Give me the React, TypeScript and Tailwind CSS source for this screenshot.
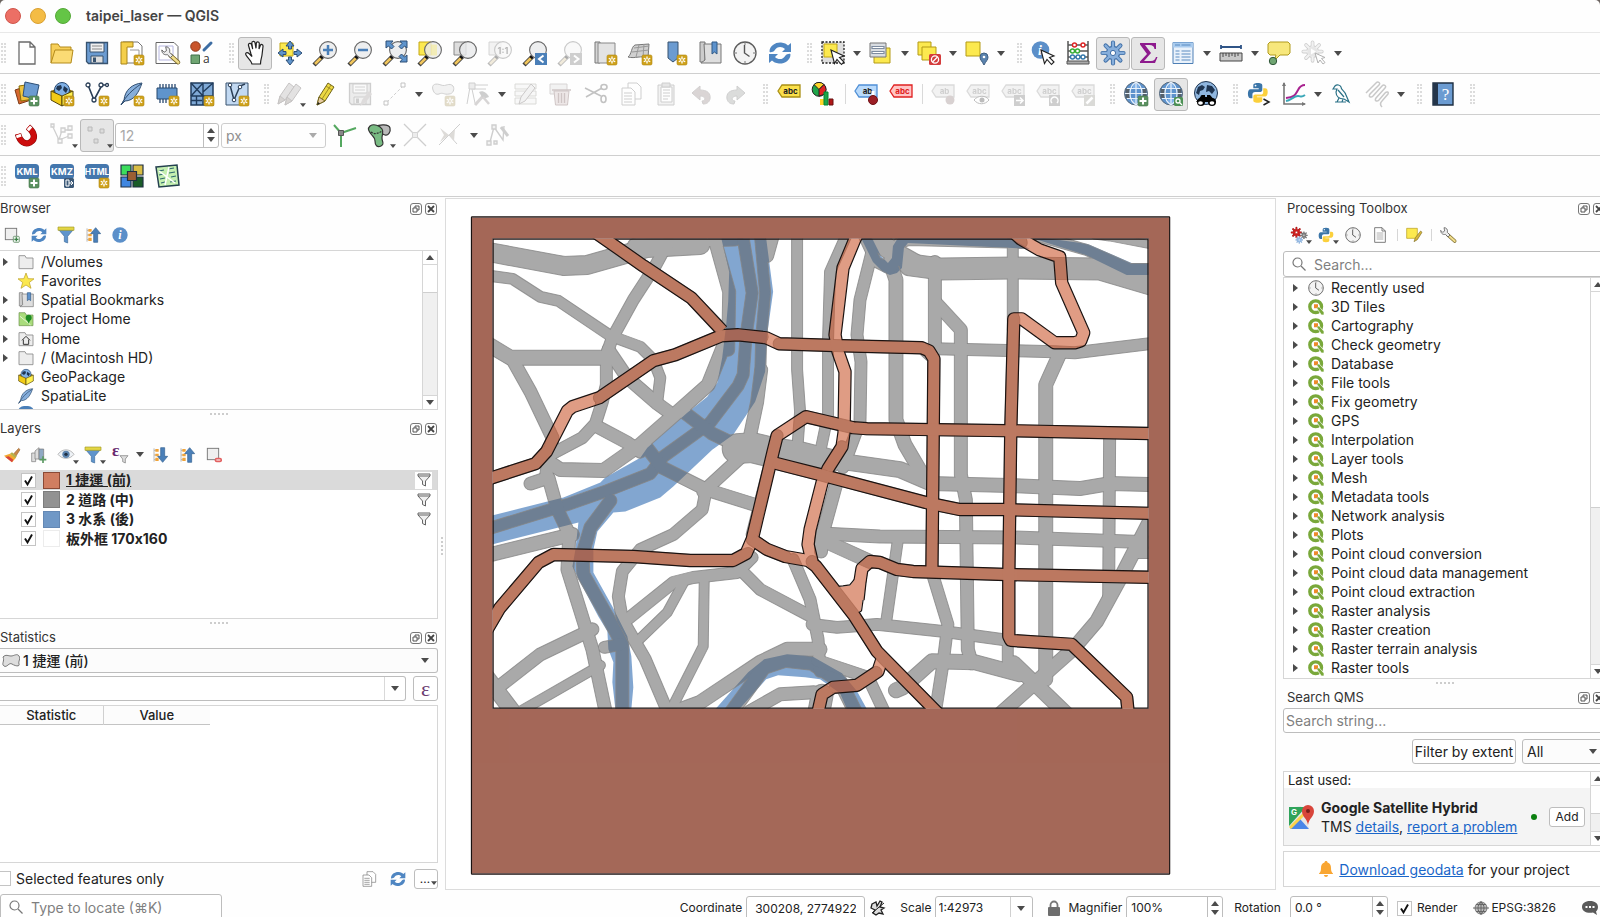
import type { ReactNode } from "react";

/* ---------- shared icon parts (24x24 grid) ---------- */

const star = (
  <g>
    <rect x="14" y="14" width="10" height="10" rx="1.5" fill="#cfa21c" stroke="#b0860f" strokeWidth=".6" />
    <path d="M19 15.5v7M15.8 17.2l6.4 3.6M22.2 17.2l-6.4 3.6" stroke="#fff" strokeWidth="1.3" />
    <circle cx="19" cy="19" r="1" fill="#cfa21c" />
  </g>
);

const plus = (
  <g>
    <rect x="14" y="14" width="10" height="10" rx="1.5" fill="#5b9160" stroke="#44764a" strokeWidth=".6" />
    <path d="M19 15.5v7M15.5 19h7" stroke="#fff" strokeWidth="2" />
  </g>
);

const lens = (
  <g>
    <path d="M9.5 15.5L1 24" stroke="#3d3d3d" strokeWidth="4.4" />
    <path d="M8 17L2 23" stroke="#f0c55c" strokeWidth="2.6" />
    <path d="M7.5 15l2 2" stroke="#111" strokeWidth="3" />
    <circle cx="15" cy="9" r="8.4" fill="#e9eaeb" fillOpacity=".82" stroke="#666" strokeWidth="1.1" />
  </g>
);

const globe = (
  <g>
    <circle cx="12" cy="11.5" r="11.5" fill="#5d92cc" stroke="#5a6a7a" />
    <path d="M1.5 7h4v9h-4zM18.5 7h4v9h-4z" fill="#56616b" />
    <path d="M9 2h6v5H9zM9 16h6v5H9z" fill="#7fb0e6" />
    <path
      d="M3 6.5h18M1 11.5h22M3 16.5h18M12 0v23M12 0c-8 5-8 18 0 23M12 0c8 5 8 18 0 23"
      fill="none"
      stroke="#e8f1fa"
      strokeWidth="1.2"
    />
  </g>
);

const worldPatches = (
  <path d="M4 5l4-2 3 2-2 3-3 1-1 4-3-2zM13 3l5 1 3 4-3 4-3-3-3 1zM7 13l4 1 1 4-3 3-3-4z" fill="#1f3551" />
);

const refresh = (
  <g fill="#4f86c2">
    <path d="M1.5 10.5C1.5 4.5 8 1 13 1.5c3.5.3 5.5 1.5 7 3L23 2v9h-9l3-3c-3-3-8-3-10.5 1.5-1 1.5-5 2.5-5 1z" />
    <path d="M22.5 13.5c0 6-6.5 9.5-11.5 9-3.5-.3-5.5-1.5-7-3L1 22v-9h9l-3 3c3 3 8 3 10.5-1.5 1-1.5 5-2.5 5-1z" />
  </g>
);

const arrowUpDown = (up: boolean) => (
  <g>
    <path d="M3 2v20M3 5h6M3 12h6M3 19h6" stroke="#9a9a9a" fill="none" />
    <path d="M5 3h5v4H5zM5 16h5v5H5zM5 10h5v4H5z" fill="#f0a43a" />
    <path
      d="M13 23V10H8.5L16 1l7.5 9H19v13z"
      fill="#4a7fb8"
      stroke="#305f90"
      transform={up ? undefined : "rotate(180 16 12)"}
    />
  </g>
);

const tag = (fill: string, line: string, text: string, color = "#222") => (
  <g>
    <path d="M1 9l4-6h18v12H5z" fill={fill} stroke={line} strokeWidth="1.3" />
    <text x="13.5" y="12" textAnchor="middle" fontSize="8" fontWeight="700" fontFamily="Inter, sans-serif" fill={color}>
      {text}
    </text>
  </g>
);

const funnel = (
  <g>
    <path d="M1 4h22l-8.5 10v10l-5-2v-8z" fill="#5f94cc" stroke="#3f6c9c" />
    <path d="M0 0h24v5H0z" fill="#e3d644" stroke="#a59b25" />
  </g>
);

const feather = (
  <g>
    <path d="M22 1C12 2 5 8 4 18l-3 5 4-4c9 0 14-9 17-18z" fill="#86aedb" stroke="#2f4d70" />
    <path d="M1 23C6 14 12 8 21 2" fill="none" stroke="#2f4d70" />
  </g>
);

const geoBox = (
  <g>
    <path d="M1 9l11 5 11-5-11-5z" fill="#8a6d06" />
    <circle cx="12" cy="8" r="7.5" fill="#7fb0e6" stroke="#27486f" />
    <path d="M7 4l4-1 1 3-3 3-3-2zM14 4l4 3-2 4-3-3z" fill="#1f3551" />
    <path d="M1 9l11 5v10L1 18z" fill="#f2cb16" stroke="#54450a" />
    <path d="M23 9l-11 5v10l11-6z" fill="#fff04f" stroke="#54450a" />
  </g>
);

const python = (
  <g>
    <path d="M12 1c-4 0-5 1-5 3v3h6v1H4c-2 0-3 2-3 5s1 5 3 5h2v-4c0-2 1-3 3-3h6c1 0 2-1 2-2V4c0-2-1-3-5-3z" fill="#3b75a8" />
    <path d="M12 23c4 0 5-1 5-3v-3h-6v-1h9c2 0 3-2 3-5s-1-4-3-4h-2v4c0 2-1 3-3 3H9c-1 0-2 1-2 2v4c0 2 1 3 5 3z" fill="#fbd03c" />
    <circle cx="9.5" cy="4" r="1" fill="#fff" />
  </g>
);

const clock = (
  <g>
    <circle cx="12" cy="12" r="11" fill="#f3f3f3" stroke="#5c5c5c" strokeWidth="1.3" />
    <path d="M11.5 4v8l5 3.5" fill="none" stroke="#555" strokeWidth="1.4" />
    <path d="M12 2v2M12 20v2M2 12h2M20 12h2" stroke="#777" />
  </g>
);

const wrench = (
  <g>
    <path d="M12 12l10 9" stroke="#7b6a2c" strokeWidth="5.4" strokeLinecap="round" />
    <path d="M12 12l10 9" stroke="#f0dd8c" strokeWidth="3.4" strokeLinecap="round" />
    <path d="M6 1l1 5-3 2-3-3c0 5 4 7 7 6l4 4 3-3-4-4c1-4-1-7-5-7z" fill="#ececec" stroke="#444" />
  </g>
);

const pencil = (
  <g>
    <path d="M4 23l2-8L15 1l6 4-9 14z" fill="#ecd843" stroke="#71651c" />
    <path d="M4 23l2-8 6 4z" fill="#e7cba3" stroke="#71651c" />
    <path d="M4 23l1-3 2 1.5z" fill="#222" />
    <path d="M13 4l6 4M9 17l9-14" fill="none" stroke="#a08f22" />
  </g>
);

const floppy = (a: string, b: string) => (
  <g>
    <path d="M1.5 1.5h21v21h-19l-2-2z" fill={a} stroke={b} strokeWidth="1.3" />
    <path d="M5 2h14v9H5z" fill="#f0f0f0" stroke={b} />
    <path d="M7 5h10M7 8h10" stroke="#888" />
    <path d="M6 15h12v7H6z" fill="#ddd" stroke={b} />
    <path d="M8 16.5h3V21H8z" fill={b} />
  </g>
);

const sheet = <path d="M4 1h11l5 5v17H4zM15 1v5h5" fill="#fff" stroke="#6b6b6b" strokeWidth="1.3" />;

const copy = (
  <g fill="#fff" stroke="#777">
    <path d="M9 1h9l4 4v12H9z" />
    <path d="M3 6h9l4 4v13H3z" />
    <path d="M5 11h8M5 14h8M5 17h8M5 20h8" />
  </g>
);

const cursor = <path d="M10 9l3.5 13.5 2.5-4 4.5 5 2.5-2.5-4.5-4.5 4.5-1.5z" fill="#fff" stroke="#222" strokeWidth="1.1" />;

const gear = (fill: string, line: string) => (
  <g>
    <path
      d="M12 1.5v21M1.5 12h21M4.6 4.6l14.8 14.8M19.4 4.6L4.6 19.4"
      stroke={line}
      strokeWidth="4.2"
      strokeLinecap="round"
    />
    <circle cx="12" cy="12" r="7.2" fill={line} />
    <path d="M12 1.5v21M1.5 12h21M4.6 4.6l14.8 14.8M19.4 4.6L4.6 19.4" stroke={fill} strokeWidth="2.4" strokeLinecap="round" />
    <circle cx="12" cy="12" r="6" fill={fill} />
    <circle cx="12" cy="12" r="2.6" fill="#fff" stroke={line} />
  </g>
);

const bookmarkBook = (
  <g>
    <path d="M2 1h5v20H2z" fill="#ccc" stroke="#777" />
    <path d="M6 3h17v19H3l4-3z" fill="#dedede" stroke="#777" />
    <path d="M14 1h5v12l-2.5-2-2.5 2z" fill="#5d92cc" stroke="#315b87" />
  </g>
);

const folder = (
  <path d="M1.5 2.5h9l2 3.5h10v16h-21z" fill="#ededed" stroke="#8c8c8c" strokeWidth="1.3" />
);

const box = <rect x="2" y="2" width="17" height="17" fill="#efefef" stroke="#777" strokeWidth="1.4" />;

const kmlTag = (text: string) => (
  <g>
    <rect x="0" y="0" width="24" height="15" rx="3.5" fill="#4477ad" />
    <text x="12" y="11" textAnchor="middle" fontSize={text.length > 3 ? 8.5 : 9.5} fontWeight="700" fontFamily="Inter, sans-serif" fill="#fff">
      {text}
    </text>
  </g>
);

const icons: Record<string, ReactNode> = {
  file: sheet,
  open: (
    <g stroke="#b38a1a">
      <path d="M1 22V3h7l2 3h11v5" fill="#f7cf59" />
      <path d="M1 22L5 9h18l-2 13z" fill="#fbdb74" />
    </g>
  ),
  save: floppy("#6b9bd1", "#38536f"),
  layout: (
    <g>
      <path d="M3 1h15l4 4v17H3z" fill="#fff" stroke="#777" />
      <path d="M1 1h12v5H7v17H1z" fill="#f4cf4a" stroke="#a98518" />
      <path d="M10 9h9v8" fill="none" stroke="#999" />
      {star}
    </g>
  ),
  manager: (
    <g>
      <path d="M1 1.5h18l4 4v17H1z" fill="#fff" stroke="#666" />
      <path d="M4 5h14v14H4z" fill="none" stroke="#b6b6e0" />
      <g transform="translate(6 5) scale(.78)">{wrench}</g>
    </g>
  ),
  style: (
    <g>
      <circle cx="5.5" cy="5.5" r="4.8" fill="#c9562c" stroke="#8f3a1a" />
      <path d="M14 9l7-7" stroke="#3d6da3" strokeWidth="3" strokeLinecap="round" />
      <path d="M1 14h8.5v8.5H1z" fill="#6fa572" stroke="#41704a" />
      <text x="13" y="22" fontSize="12" fontFamily="Open Sans, sans-serif" fill="#333">a</text>
    </g>
  ),
  hand: (
    <path
      d="M8 13L5.5 4.5c-.5-2.5 2.5-3 3-.8L9.7 8 8.8 2c0-2 2.7-2.3 3.2-.3l1 5.6.3-5.1c.3-2 3-1.7 3 .3L16 8l1.3-3.5c.8-1.800 3-1 2.700 1L19 14c-.4 3.500-1.500 4.500-1.500 9H9C8 19 4.500 17 3 14c-1-2 1-3.500 3-1.500l3 3z"
      fill="#fff"
      stroke="#222"
      strokeWidth="1.2"
    />
  ),
  pan: (
    <g>
      <path d="M2 2h13v13H2z" fill="#fce94f" stroke="#c4a817" />
      <path
        d="M12 0l4 5h-2.5v3h-3V5H8zM12 24l4-5h-2.5v-3h-3v3H8zM0 12l5-4v2.5h3v3H5V16zM24 12l-5-4v2.5h-3v3h3V16z"
        fill="#5f94cc"
        stroke="#2d4f76"
      />
    </g>
  ),
  zoomIn: <g>{lens}<path d="M15 4v10M10 9h10" stroke="#4a7fb8" strokeWidth="2.5" /></g>,
  zoomOut: <g>{lens}<path d="M10 9h10" stroke="#4a7fb8" strokeWidth="2.5" /></g>,
  zoomFull: (
    <g>
      {lens}
      <path d="M3 0h7L8 2.5l3 3L8.5 8l-3-3L3 7zM24 0h-7l2 2.5-3 3L18.5 8l3-3L24 7zM24 21h-7l2-2.5-3-3 2.5-2.5 3 3L24 14z" fill="#5f94cc" stroke="#2d4f76" />
    </g>
  ),
  zoomSel: <g><path d="M1 1h12v13H1z" fill="#fce94f" stroke="#c4a817" />{lens}<path d="M13 3.5h6v11h-6z" fill="#fce94f" opacity=".35" /></g>,
  zoomLayer: <g><path d="M1 1h12v13H1z" fill="#ddd" stroke="#888" />{lens}</g>,
  zoomNative: (
    <g>
      <path d="M1 1h12v13H1z" fill="#ddd" stroke="#888" />
      {lens}
      <text x="15" y="12.5" textAnchor="middle" fontSize="9" fontWeight="700" fontFamily="Inter, sans-serif" fill="#333">1:1</text>
    </g>
  ),
  zoomLast: <g>{lens}<path d="M12 12h12v12H12z" fill="#4a7fb8" /><path d="M20.5 14.5L16 18l4.5 3.5" stroke="#fff" strokeWidth="2" fill="none" /></g>,
  zoomNext: <g>{lens}<path d="M12 12h12v12H12z" fill="#777" /><path d="M16 14.5l4.5 3.5-4.5 3.5" stroke="#fff" strokeWidth="2" fill="none" /></g>,
  newMap: <g><path d="M2 1h5v21H2z" fill="#d5d5d5" stroke="#777" /><path d="M5 2h17v20H5z" fill="#e3e3e3" stroke="#888" />{star}</g>,
  map3d: <g><path d="M0 16c4-3 3-10 7-12l14-1-1 14c-7-3-13 1-20-1z" fill="#d0d0d0" stroke="#777" /><path d="M4 11l17-2M11 4L8 16M16 3l-1 13M6 7l15-2" stroke="#999" fill="none" />{star}</g>,
  newMark: <g><path d="M5 1h10v16l-5 4-5-4z" fill="#6b9bd1" stroke="#38536f" />{star}</g>,
  marks: bookmarkBook,
  clock,
  refresh,
  select: (
    <g>
      <path d="M1 1h22v21H1z" fill="#dedede" stroke="#222" strokeWidth="1.3" strokeDasharray="2 1.5" />
      <path d="M3 3h13v13H3z" fill="#fce94f" stroke="#c4a817" />
      {cursor}
    </g>
  ),
  selValue: (
    <g>
      <path d="M5 7h16v15H5z" fill="#fce94f" stroke="#b39a17" />
      <path d="M1 2h16v14H1z" fill="#d9dde2" stroke="#777" />
      <path d="M3 5.5h12v2H3zM3 10.5h12v2H3z" fill="#fff" stroke="#7e8ca0" strokeWidth="1.2" />
    </g>
  ),
  deselect: (
    <g>
      <path d="M1 1h13v13H1z" fill="#fce94f" stroke="#b39a17" />
      <path d="M5 6h14v13H5z" fill="#fce94f" stroke="#b39a17" />
      <rect x="12" y="13" width="12" height="11" rx="1.5" fill="#d43c3c" />
      <circle cx="18" cy="18.5" r="3.6" fill="none" stroke="#fff" strokeWidth="1.3" />
      <path d="M15.5 21l5-5" stroke="#fff" strokeWidth="1.3" />
    </g>
  ),
  selLoc: (
    <g>
      <path d="M1 1h14v14H1z" fill="#fce94f" stroke="#b39a17" />
      <path d="M19 24c-2-4-4-5-4-8a4 4 0 018 0c0 3-2 4-4 8z" fill="#5b83ad" stroke="#3f5f82" />
      <circle cx="19" cy="16" r="1.3" fill="#fff" />
    </g>
  ),
  identify: (
    <g>
      <circle cx="9.5" cy="9" r="8.8" fill="#5b8fc9" />
      <text x="9" y="14" textAnchor="middle" fontSize="14" fontStyle="italic" fontWeight="700" fontFamily="Liberation Serif, serif" fill="#fff">i</text>
      {cursor}
    </g>
  ),
  abacus: (
    <g>
      <path d="M2 0v23M22 0v23M2 4h20M2 10h20M2 16h20" stroke="#555" strokeWidth="1.5" />
      <path d="M1 20h22v3H1z" fill="#aaa" stroke="#555" />
      <g fill="#fff" strokeWidth="1.4">
        <g stroke="#d22"><circle cx="8.5" cy="4" r="2" /><circle cx="17" cy="4" r="2" /></g>
        <g stroke="#3a3"><circle cx="6.5" cy="10" r="2" /><circle cx="11.5" cy="10" r="2" /></g>
        <g stroke="#37a"><circle cx="6.5" cy="16" r="2" /><circle cx="12" cy="16" r="2" /><circle cx="17" cy="16" r="2" /></g>
      </g>
    </g>
  ),
  gear: gear("#86aedb", "#3f6ea5"),
  sigma: <path d="M4 2h16v6h-1.5c-.5-3-2-4-5-4H9l6 8-7 8h7c3 0 4-1.5 5-4h1.5L19 22H4v-1.5L11 13 4 3.5z" fill="#8d1a8d" />,
  table: (
    <g>
      <path d="M2 1.5h20v21H2z" fill="#eaf2fb" stroke="#4d7fb5" />
      <path d="M2 1.5h20v5H2z" fill="#a9cbee" />
      <path d="M4.5 10h4M10.5 10h9M4.5 13h4M10.5 13h9M4.5 16h4M10.5 16h9M4.5 19h4M10.5 19h9M4 4h5M10.5 4h9" stroke="#5a8cc2" strokeWidth="1.2" />
    </g>
  ),
  ruler: (
    <g>
      <path d="M2 6h20M2 4v4M22 4v4" stroke="#2f5486" strokeWidth="1.8" />
      <path d="M1 12h22v8H1z" fill="#c9c9c9" stroke="#444" />
      <path d="M4 12v4M7 12v3M10 12v4M13 12v3M16 12v4M19 12v3" stroke="#444" />
    </g>
  ),
  tip: (
    <g>
      <path d="M3 1h18l2 2v9l-2 2h-8l-6 6 2-6H3l-2-2V3z" fill="#f7e77c" stroke="#b09a1d" />
      <circle cx="6" cy="20" r="3.7" fill="#6fa572" stroke="#31573a" />
    </g>
  ),
  action: (
    <g>
      <g transform="scale(.88)">{gear("#ddd", "#777")}</g>
      <circle cx="10.5" cy="10.5" r="5" fill="#bbb" />
      <path d="M9 7.5l5 3-5 3z" fill="#fff" />
      <path d="M13 12l3 10 2-3 3 4 2-1.5-3.500-4 3.500-1z" fill="#fff" stroke="#222" />
    </g>
  ),
  dataSrc: (
    <g>
      <path d="M0 8l12-4 4 14-12 4z" fill="#d6672e" stroke="#7d3a17" />
      <path d="M4 4l13-2 2 15-13 2z" fill="#f0c43f" stroke="#8a6d06" />
      <path d="M10 0l14 3-3 14-13-3z" fill="#6b9bd1" stroke="#2d4f76" />
      {plus}
    </g>
  ),
  newGpkg: <g>{geoBox}{star}</g>,
  newShp: (
    <g>
      <path d="M3 3l6 15L17 3h6" fill="none" stroke="#2b3f57" strokeWidth="1.6" />
      <g fill="#fff" stroke="#2b3f57" strokeWidth="1.3"><circle cx="3" cy="3" r="2" /><circle cx="9" cy="18" r="2" /><circle cx="16" cy="3" r="2" /><circle cx="22" cy="3" r="1.5" /></g>
      {star}
    </g>
  ),
  newSpl: <g>{feather}{star}</g>,
  memory: <g><path d="M2 6h20v11H2z" fill="#5f94cc" stroke="#27486f" /><path d="M5 2v4M8 2v4M11 2v4M14 2v4M17 2v4M20 2v4M5 17v4M8 17v4M11 17v4" stroke="#27486f" strokeWidth="1.3" />{star}</g>,
  mesh: <g><path d="M1 1h22v22H1z" fill="#7fa9d6" stroke="#1f3b5c" strokeWidth="1.5" /><path d="M1 14h22M13 1v22M1 1l12 13M1 14L13 1M13 10L23 1M6.5 14v9M1 18.5h11" fill="none" stroke="#1f3b5c" strokeWidth="1.4" />{star}</g>,
  virtual: <g><path d="M1 1h22v22H1z" fill="#c2d9f2" stroke="#38536f" /><path d="M5 3l4 15 6-14 5-2" fill="none" stroke="#2b3f57" strokeWidth="1.5" /><g fill="#fff" stroke="#2b3f57"><circle cx="5" cy="3" r="1.8" /><circle cx="9" cy="18" r="1.8" /><circle cx="15" cy="5" r="1.8" /></g>{star}</g>,
  edits: <g fill="#b5b0b0" stroke="#655"><path d="M0 22l2-8L11 1l5 4L7 18z" /><path d="M7 23l2-8 9-13 5 4-9 13z" /><path d="M0 22l2-8 5 4zM7 23l2-8 5 4z" fill="#987" /></g>,
  pencil,
  saveEdit: <g>{floppy("#ccc", "#777")}<path d="M12 24l2-6 7-9 3 3-6 8z" fill="#a99" /></g>,
  digitize: <g><path d="M4 20L20 4" stroke="#777" strokeDasharray="3 2" /><path d="M1 19h4v4H1zM18 1h4v4h-4z" fill="#fff" stroke="#555" /></g>,
  poly: <g><path d="M2 8c-2-6 3-7 8-5s8-3 12 1c2 3 0 8-4 8-5 1-6-2-10 0-3 1-5-1-6-4z" fill="#ddd" stroke="#777" />{star}</g>,
  vertex: <g><path d="M4 5L1 22M5 3h17M7 7h13M6 7l3 14" stroke="#777" fill="none" /><path d="M3 1h6v6H3z" fill="#ccc" stroke="#777" /><path d="M9 23l9-10" stroke="#988" strokeWidth="3" /><path d="M13 10c4-2 8 1 10 5l-3 1-3 1z" fill="#777" /><path d="M17 15l6 7" stroke="#988" strokeWidth="2.5" /></g>,
  multi: <g><path d="M1 2h21v5H1zM1 9h21v5H1zM1 16h21v6H1z" fill="#eee" stroke="#998" /><path d="M5 22l2-7L17 2l4 4-10 13z" fill="#ddd" stroke="#766" /></g>,
  trash: <g><path d="M1 2h17v10H1z" fill="#ddd" stroke="#988" /><path d="M5 9h15l-1.5 14h-12z" fill="#e6b8b8" stroke="#955" /><path d="M3 8h19M9.5 11v10M12.5 11v10M15.5 11v10" stroke="#955" strokeWidth="1.3" /></g>,
  cut: <g fill="none" stroke="#555" strokeWidth="1.6"><path d="M1 6l16 8M2 15L18 6" /><ellipse cx="20" cy="5" rx="3" ry="2.5" /><ellipse cx="19.5" cy="17" rx="2.5" ry="3.5" /></g>,
  copy,
  paste: <g stroke="#777"><path d="M4 3h16v20H4z" fill="#ddd" /><path d="M7 5h11v15H7z" fill="#fff" /><path d="M8 1h8v4H8zM9 8h7M9 11h7M9 14h7M9 17h5" fill="#bbb" /></g>,
  undo: <path d="M3 11l8-7v4c7 0 11 3 10 9-1 4-4 5-7 5l-1-3c4 0 4-5-2-5v4z" fill="#a88" stroke="#877" />,
  redo: <path d="M21 11l-8-7v4C6 8 2 11 3 17c1 4 4 5 7 5l1-3c-4 0-4-5 2-5v4z" fill="#9a9f9a" stroke="#777" />,
  label: tag("#fbe04a", "#a98f14", "abc"),
  diagram: (
    <g>
      <circle cx="7" cy="7.5" r="6.8" fill="#1ea54a" stroke="#222" />
      <path d="M7 7.5L2 2.5A7 7 0 0112 2.5z" fill="#ffd42a" stroke="#222" />
      <path d="M7 7.5l5-5a7 7 0 010 10l-5 1.5z" fill="#e02424" stroke="#222" />
      <path d="M8 17h4v6H8z" fill="#ffd42a" /><path d="M12 10h4v13h-4z" fill="#1ea54a" stroke="#083" /><path d="M17 17h4v6h-4z" fill="#b01818" stroke="#611" />
    </g>
  ),
  pin: <g>{tag("#b9dafb", "#4f8fd6", "ab")}<path d="M19 9v8" stroke="#fff" strokeWidth="3" /><circle cx="19" cy="18" r="4.5" fill="#9c1f26" stroke="#6e1015" /></g>,
  unplaced: tag("#ffc4c4", "#e02020", "abc", "#e02020"),
  tagPin: <g>{tag("#ddd", "#999", "ab", "#777")}<circle cx="19" cy="18" r="4.5" fill="#a77" /></g>,
  tagEye: <g>{tag("#ddd", "#999", "abc", "#777")}<path d="M8 18c4-5 12-5 15 0-4 5-11 5-15 0z" fill="#fff" stroke="#444" /><circle cx="16" cy="18" r="2.5" fill="#444" /></g>,
  tagMove: <g>{tag("#ddd", "#999", "abc", "#777")}<path d="M13 13h11v11H13z" fill="#777" /><path d="M15 18.5h7M19 15.5l3 3-3 3" stroke="#fff" strokeWidth="1.5" fill="none" /></g>,
  tagRot: <g>{tag("#ddd", "#999", "abc", "#777")}<path d="M13 13h11v11H13z" fill="#777" /><path d="M16 21a3.5 3.5 0 115 0" stroke="#fff" strokeWidth="1.5" fill="none" /></g>,
  tagEdit: <g>{tag("#ddd", "#999", "abc", "#777")}<path d="M13 13h11v11H13z" fill="#998" /><path d="M15.5 21.5l6-6" stroke="#fff" strokeWidth="2.5" /></g>,
  globeAdd: <g>{globe}{plus}</g>,
  globeFind: <g>{globe}<rect x="15" y="15" width="9" height="9" rx="1.5" fill="#4d9155" /><circle cx="19" cy="19" r="2" fill="none" stroke="#fff" strokeWidth="1.3" /><path d="M20.5 20.5l2.5 2.5" stroke="#fff" strokeWidth="1.3" /></g>,
  globeBino: (
    <g>
      <circle cx="12" cy="11" r="11.5" fill="#8fb6df" stroke="#1f3551" />
      {worldPatches}
      <path d="M8 13h3v2h2v-2h3l6 7H2z" fill="#000" />
      <circle cx="7" cy="20" r="4" /><circle cx="18" cy="20" r="4" />
      <ellipse cx="6.5" cy="21" rx="2.4" ry="1.7" fill="#fff" /><ellipse cx="18" cy="21" rx="2.4" ry="1.7" fill="#fff" />
    </g>
  ),
  console: <g><g transform="scale(.9)">{python}</g><path d="M16.5 17l5.5 3-5.5 3" stroke="#222" strokeWidth="1.5" fill="none" /></g>,
  plot: <g fill="none"><path d="M2 1v21h21" stroke="#777" strokeWidth="1.6" /><path d="M2 0L0 4h4zM24 22l-4-2v4z" fill="#777" /><path d="M4 16c9-1 9-3 12-8 2-4 4-5 7-5" stroke="#a8218f" strokeWidth="2" /><path d="M4 19c5-1 8-5 12-5 3 0 3 2 7-1" stroke="#3aa7b8" strokeWidth="2" /></g>,
  bird: <path d="M3 7l2-3c2-2 5-1 6 1 0 3 4 4 5 8l3 7-5-3c-5 0-8-3-8-7l1-3zM9 16l-2 4M13 17l-1 3M8 8l6 7M5 20h11" fill="none" stroke="#2a7187" strokeWidth="1.2" />,
  clip: <path d="M1 13L11 3c2-2 5 0 3 2L5 14c-2 3 1 4 3 2l9-10c2-2 5 0 3 2l-9 10c-2 3 1 4 3 2l6-7c2-2 4-1 3 1l-6 7c-2 2-2 4 0 6" transform="translate(0 -2)" fill="none" stroke="#666" strokeWidth="1.5" />,
  help: <g><path d="M2 1h20v22H2z" fill="#6b9bd1" stroke="#1f2f42" strokeWidth="1.4" /><path d="M2 1h5v22H2z" fill="#24354a" /><text x="14.5" y="18" textAnchor="middle" fontSize="17" fontFamily="Liberation Serif, serif" fill="#fff">?</text></g>,
  magnet: (
    <g fill="none">
      <path d="M3 11C5 19 10 22 15 19.5 21 16 20 10 13 4" stroke="#8d0a0a" strokeWidth="6.4" />
      <path d="M3 11C5 19 10 22 15 19.5 21 16 20 10 13 4" stroke="#cc0d0d" strokeWidth="5.2" />
      <path d="M3.2 11.6l1 2.7M13.4 4.4l2.2 2" stroke="#fff" strokeWidth="5" />
    </g>
  ),
  snapAll: <g fill="none" stroke="#777" strokeWidth="1.3"><path d="M2 2l7 15L12 7h9M9 17l10-4" /><path d="M1 1h3v3H1zM8 16h4v4H8zM11 5h4v4h-4zM18 3h4v4h-4zM18 11h4v4h-4z" fill="#eee" /></g>,
  snapMode: <path d="M3 4h4v4H3zM15 6h4v4h-4zM9 16h4v4H9z" fill="#ccc" stroke="#666" />,
  topo: <g><path d="M1 2l7 8 15-5M8 10v14" stroke="#55a860" strokeWidth="2" fill="none" /><path d="M5.5 7.5h5v5h-5z" fill="#888" stroke="#555" /></g>,
  overlap: <g stroke="#333" strokeWidth="1.2"><path d="M8 4c3-3 13-3 14 1s-2 8-5 7-4-3-7-3z" fill="#b9b9b9" /><path d="M2 3c4-3 10 0 12 3s0 5 0 9 3 6-1 8-6-1-6-5-2-4-4-7-4-5-1-8z" fill="#79bb83" /><path d="M3 9c4 3 8 1 11-1" fill="none" strokeDasharray="2 1" /></g>,
  cross: <g><path d="M1 1l22 22M23 1L1 23" stroke="#777" strokeWidth="1.3" /><path d="M9.5 9.5h5v5h-5z" fill="#ccc" stroke="#888" /></g>,
  selfSnap: <g><path d="M1 22L22 1M11 12l8 9" stroke="#777" fill="none" /><path d="M2 5l9 7 6-6-1 12-5-6-9 7 4-7z" fill="#a99a88" /></g>,
  trace: <g stroke="#777" fill="none" strokeWidth="1.4"><path d="M4 19L8 4l9 13 1-14" /><path d="M15 4l7 9" strokeWidth="3" /><path d="M6 2h4v4H6zM1 18h4v4H1zM8 18h3v3H8z" fill="#ddd" /></g>,
  kml: <g>{kmlTag("KML")}{plus}</g>,
  kmz: <g>{kmlTag("KMZ")}<rect x="14" y="14" width="10" height="10" rx="1.5" fill="#3d5a78" /><path d="M16 16h3v6h-3zM19 19h4M21 17l2 2-2 2" stroke="#fff" fill="none" /></g>,
  html: <g>{kmlTag("HTML")}{star}</g>,
  quad: <g stroke="#1f2f42" strokeWidth="1.2"><path d="M1 1h10v10H1z" fill="#3bdc5c" /><path d="M13 1h10v10H13z" fill="#d9bd45" /><path d="M1 13h10v10H1z" fill="#3f86e0" /><path d="M13 13h10v10H13z" fill="#1a5c28" /><path d="M7.5 7.5h9v9h-9z" fill="#9b5f33" /></g>,
  sheetMap: <g><path d="M1 3l21-2 2 20-20 2z" fill="#c4efb0" stroke="#24404f" strokeWidth="1.5" /><path d="M4 7l5-1M13 5l6-1M4 11l4-1M14 9l6-1M5 15l5-1M16 13l5-1M6 19l4-1M15 18l6-1" stroke="#2f6a6f" strokeWidth="1.2" /><path d="M4 7l16 12M14 3L10 21" stroke="#fff" strokeWidth="1.5" /></g>,
  addLayer: <g>{box}<rect x="14" y="14" width="9" height="9" rx="1.5" fill="#e9f3ea" stroke="#44764a" /><path d="M18.5 15.5v6M15.5 18.5h6" stroke="#3c8246" strokeWidth="2" /></g>,
  removeLayer: <g>{box}<rect x="13" y="16" width="11" height="7" rx="3" fill="#e26060" /><path d="M15.5 19.5h6" stroke="#fff" strokeWidth="1.5" /></g>,
  funnel,
  collapse: arrowUpDown(true),
  expand: arrowUpDown(false),
  info: <g><circle cx="12" cy="12" r="11.5" fill="#5b8fc9" /><text x="12" y="18" textAnchor="middle" fontSize="18" fontStyle="italic" fontWeight="700" fontFamily="Liberation Serif, serif" fill="#fff">i</text></g>,
  brush: <g><path d="M13 12l9-10 2 2-7 11z" fill="#c98a4a" stroke="#9d6a3a" /><path d="M0 13l9-3 9 6-6 7z" fill="#f2a92f" /><path d="M2 15l5-1 7 5-2 4z" fill="#d7443e" /><path d="M9 10l3-2 7 6-2 3z" fill="#b5b04a" /></g>,
  group: <g stroke="#777"><path d="M1 9h6v13H1z" fill="#ddd" /><path d="M6 6l6-5v17H6z" fill="#ddd" /><path d="M12 3h7v16h-7z" fill="#8fa9c4" /><path d="M18 14v10M13 19h10" stroke="#5c9a63" strokeWidth="2.5" /></g>,
  eye: <g><path d="M0 11C6 2 18 2 24 11c-6 8-18 8-24 0z" fill="#eef2f6" stroke="#999" /><circle cx="12" cy="11" r="5.5" fill="#5b83ad" /><circle cx="12" cy="11" r="2.5" fill="#1f2f42" /></g>,
  epsFilter: <g><text x="0" y="14" fontSize="26" fontWeight="700" fontFamily="Liberation Serif, serif" fill="#6a2b70">ε</text><path d="M12 13h12l-4 5v6l-4-2v-4z" fill="#ddd" stroke="#777" /></g>,
  folder,
  favorite: <path d="M12 0l3.2 8.5 8.8.3-7 5.4 2.5 8.8L12 18l-7.5 5L7 14.2 0 8.8l8.8-.3z" fill="#fbe84f" stroke="#b89c1c" />,
  project: <g><path d="M1.5 2.5h9l2 3.5h10v16h-21z" fill="#a9dc7c" stroke="#6d8f4f" /><path d="M3 8l16 13" stroke="#fff" /><circle cx="16" cy="10" r="4.5" fill="#1d8a25" /><path d="M13 12l3 7 3-7z" fill="#1d8a25" /></g>,
  homeDir: <g>{folder}<path d="M6 14l6-6 6 6M8 13v7h8v-7" fill="none" stroke="#333" strokeWidth="1.5" /></g>,
  geoBox,
  feather,
  python,
  wrench,
  modeler: <g><g transform="scale(.68)">{gear("#d11f1f", "#a01010")}</g><g transform="translate(14 7) scale(.45)">{gear("#888", "#666")}</g><g transform="translate(7 14) scale(.45)">{gear("#9cc0ea", "#7fa6d1")}</g></g>,
  report: <g>{sheet}<path d="M7 9h10M7 12h10M7 15h10M7 18h10" stroke="#888" /></g>,
  editPlace: <g><path d="M1 2h16v15H1z" fill="#fce94f" stroke="#b39a17" /><path d="M12 22l2-6 8-10 2 2-7 11z" fill="#d8b73a" stroke="#80702a" /></g>,
  qgis: (
    <g>
      <circle cx="11.5" cy="11.5" r="8.8" fill="#fff" stroke="#79a83a" strokeWidth="5" />
      <path d="M12 12h5l7 8v4h-4z" fill="#79a83a" stroke="#fff" />
      <path d="M9 8h6v3l-2 3H9z" fill="#ee8a2c" />
    </g>
  ),
};

function Icon({ name, size = 24, off = false }: { name: string; size?: number; off?: boolean }) {
  return (
    <svg
      viewBox="0 0 24 24"
      width={size}
      height={size}
      aria-hidden="true"
      className={`shrink-0 overflow-visible ${off ? "opacity-35 grayscale-[60%]" : ""}`}
    >
      {icons[name]}
    </svg>
  );
}

function Caret({ up = false, light = false }: { up?: boolean; light?: boolean }) {
  return (
    <svg viewBox="0 0 8 5" aria-hidden="true" className={`pointer-events-none h-[5px] w-2 shrink-0 ${up ? "rotate-180" : ""}`}>
      <path d="M0 0h8L4 5z" fill={light ? "#aaa" : "#4b4b4b"} />
    </svg>
  );
}

function SmallCaret() {
  return (
    <svg viewBox="0 0 8 5" aria-hidden="true" className="pointer-events-none h-1 w-[6px] shrink-0">
      <path d="M0 0h8L4 5z" fill="#4b4b4b" />
    </svg>
  );
}

function Grip() {
  return (
    <div className="flex w-[18px] shrink-0 justify-center pl-1">
      <div className="h-5 w-[5px] border-x-2 border-dotted border-[#dcdcdc]" />
    </div>
  );
}

/* ---------- toolbars ---------- */

// suffixes: "!" pressed, "-" disabled, ">" drop-down beside, "." small corner menu
const mainBar =
  "file open save layout manager style | hand! pan zoomIn zoomOut zoomFull zoomSel zoomLayer zoomNative- zoomLast zoomNext- newMap map3d newMark marks clock refresh | select> selValue> deselect> selLoc> | identify abacus gear! sigma! table> ruler> tip action->";
const layerBar =
  "dataSrc newGpkg newShp newSpl memory mesh virtual | edits-. pencil saveEdit- digitize-> poly- vertex-> multi- trash- cut- copy- paste- undo- redo- | label diagram / pin unplaced / tagPin- tagEye- tagMove- tagRot- tagEdit- | globeAdd globeFind! globeBino | console plot> bird clip-> | help |";

function Tool({ spec }: { spec: string }) {
  const name = spec.replace(/[!\-.>]/g, "");
  if (spec === "|") return <Grip />;
  if (spec === "/") return <div className="mx-[3px] h-5 w-px shrink-0 bg-[#d9d9d9]" />;
  const pressed = spec.includes("!");
  return (
    <button aria-label={name} className={`relative flex h-[33px] shrink-0 items-center ${spec.includes(">") ? "w-12" : "w-[35px]"}`}>
      <span
        className={`flex h-[33px] w-[34px] items-center justify-center rounded-[3px] ${
          pressed ? "border border-[#b9b9b9] bg-[#e6e6e6]" : ""
        }`}
      >
        <Icon name={name} off={spec.includes("-")} />
      </span>
      {spec.includes(">") && (
        <span className="ml-[3px]"><Caret /></span>
      )}
      {spec.includes(".") && (
        <span className="absolute right-[2px] bottom-1 flex"><SmallCaret /></span>
      )}
    </button>
  );
}

function ToolRow({ bar, children }: { bar?: string; children?: ReactNode }) {
  return (
    <div className="flex h-[41px] shrink-0 items-center overflow-hidden border-b border-[#cfcfcf]">
      <div className="mr-1 ml-px h-5 w-[5px] shrink-0 border-x-2 border-dotted border-[#dcdcdc]" />
      {bar?.split(" ").map((s, i) => <Tool key={i} spec={s} />)}
      {children}
    </div>
  );
}

function Spin({ id, value, className, off = false }: { id: string; value: string; className: string; off?: boolean }) {
  return (
    <div className={`flex h-[25px] shrink-0 rounded-[3px] border border-[#bdbdbd] bg-white ${className}`}>
      <input id={id} aria-label={id} defaultValue={value} className={`min-w-0 flex-1 px-1 outline-none ${off ? "text-[#a8a8a8]" : ""}`} />
      <div className="flex w-[15px] flex-col items-center justify-center gap-1 border-l border-[#bdbdbd]">
        <Caret up />
        <Caret />
      </div>
    </div>
  );
}

/* ---------- dock widgets ---------- */

function DockTitle({ text }: { text: string }) {
  return (
    <div className="flex h-[21px] shrink-0 items-center text-[13px] text-[#333]">
      <span className="flex-1">{text}</span>
      <button aria-label={`Float ${text}`} className="mr-[3px] flex h-3 w-3 items-center justify-center rounded-[3px] border border-[#777]">
        <svg viewBox="0 0 8 8" className="h-2 w-2"><path d="M1 3h4v4H1zM3 3V1h4v4H5" fill="none" stroke="#555" /></svg>
      </button>
      <button aria-label={`Close ${text}`} className="mr-px flex h-3 w-3 items-center justify-center rounded-[3px] border border-[#777]">
        <svg viewBox="0 0 8 8" className="h-2 w-2"><path d="M1 1l6 6M7 1L1 7" stroke="#444" strokeWidth="1.8" /></svg>
      </button>
    </div>
  );
}

function DockTools({ bar }: { bar: string }) {
  return (
    <div className="-ml-px flex h-[31px] shrink-0 items-center">
      {bar.split(" ").map((s, i) => {
        if (s === "/") return <div key={i} className="mx-[3px] h-3 w-px bg-[#d6d6d6]" />;
        const name = s.replace(/[.>]/g, "");
        return (
          <button key={i} aria-label={name} className={`relative flex h-6 shrink-0 items-center pl-[5px] ${s.includes(">") ? "w-10" : "w-[27px]"}`}>
            <Icon name={name} size={16} />
            {s.includes(">") && <span className="ml-2"><Caret /></span>}
            {s.includes(".") && (
              <span className="absolute right-px bottom-[3px] flex"><SmallCaret /></span>
            )}
          </button>
        );
      })}
    </div>
  );
}

function Splitter() {
  return (
    <div className="flex h-2 shrink-0 items-center justify-center">
      <div className="h-0.5 w-[18px] border-t-2 border-dotted border-[#cdcdcd]" />
    </div>
  );
}

function ScrollBar({ thumb }: { thumb: string }) {
  return (
    <div className="flex w-[15px] shrink-0 flex-col border-l border-[#d6d6d6] bg-[#f0f0f0]">
      <div className="flex h-[14px] items-center justify-center border-b border-[#d6d6d6] bg-white"><Caret up /></div>
      <div className={`border-b border-[#cfcfcf] bg-white ${thumb}`} />
      <div className="flex-1" />
      <div className="flex h-[14px] items-center justify-center border-t border-[#d6d6d6] bg-white"><Caret /></div>
    </div>
  );
}

function TreeRow({ icon, text, leaf = false, indent }: { icon: string; text: string; leaf?: boolean; indent: string }) {
  return (
    <li className={`flex min-h-0 items-center text-[14px] leading-[18px] ${indent}`}>
      <svg viewBox="0 0 5 8" className={`h-2 w-[5px] ${leaf ? "invisible" : ""}`} aria-hidden="true">
        <path d="M0 0v8l5-4z" fill="#4b4b4b" />
      </svg>
      <span className="mr-[7px] ml-[10px] flex"><Icon name={icon} size={16} /></span>
      {text}
    </li>
  );
}

function Check({ id, checked = false }: { id: string; checked?: boolean }) {
  return (
    <span className="relative flex h-[15px] w-[15px] shrink-0">
      <input id={id} type="checkbox" defaultChecked={checked} className="peer h-[15px] w-[15px] appearance-none border border-[#c4c4c4] bg-white" />
      <svg viewBox="0 0 15 15" className="pointer-events-none absolute inset-0 hidden peer-checked:block" aria-hidden="true">
        <path d="M4 7.5l2.5 4L11 3.5" fill="none" stroke="#111" strokeWidth="1.9" />
      </svg>
    </span>
  );
}

/* ---------- map ---------- */

const frame = "M471.500 217.500h698v657h-698zM492 238.500h657v471h-657z";
const hole = "M492 238.500h657v471h-657z";

const metro = [
  "M590 229L603 238 643 266 691 298 722 331",
  "M482 482L492 478 535 464 546 452 567 411 572 407 599 398 653 361 675 355 721 336 738 335 766 338 779 344 842 346 922 348 929 351 934 359 933 470 932 572",
  "M860 229L855 239 843 268 835 335 838 352 845 372 844 433 842 447 828 469 822 483 810 530 808 545 812 562",
  "M482 638L492 621 499 609 538 563 553 555 593 556 633 557 690 561 733 561 746 554 752 540 773 452 777 436 806 417 853 428 867 429 1007 431 1157 434",
  "M752 540L767 550 785 557 808 561 816 567 854 616 877 652 941 717",
  "M773 463L820 475 926 503 960 510 1003 510 1157 514",
  "M858 600L860 582 862 569 870 562 880 563 897 570 913 572 1006 575 1157 578",
  "M883 657L878 672 857 686 833 688 822 695 817 717",
  "M1010 229L1021 239 1040 250 1060 257 1062 283 1084 333 1081 341 1075 343 1055 343 1022 319 1014 319 1011 430 1009 577 1009 637 1011 641 1072 645 1127 698 1129 717",
];

// widened junction south of the third east-west line
const wedge = "M834 588L843 587 850 586 855 580 866 576 861 611 856 614z";

const water = [
  "M721 238L729 272 728 302 726 325 722 358 717 383 707 397 687 413 647 448 640 458 605 478 600 483 563 498 491 516 491 545 578 523 575 550 572 567 580 583 598 617 607 632 608 650 613 663 612 683 615 710H631L633 688 631 657 627 637 612 607 593 573 593 550 597 532 613 513 625 512 660 498 673 487 712 450 733 435 755 402 765 372 767 335 773 292 766 238z",
  "M715 710L748 673 764 660 787 655 812 657 842 674 857 692 867 710H847L840 694 820 680 805 678 778 676 766 680 739 710z",
  "M861 238L873 262 883 272 890 275 897 273 902 268 904 248 908 243 1030 249 1010 238H898L893 246 892 258 888 263 881 256 872 238z",
  "M1032 238L1086 255 1127 275H1150V263H1132L1088 244 1045 238z",
];

// [width, centre line]
const roads: [number, string][] = [
  [19, "M482 251L563 266 587 265 647 248 700 245"],
  [16, "M635 246L660 240 735 238"],
  [11, "M482 275L512 279 540 297 558 301 610 336 640 347 653 360 660 378 657 402"],
  [12, "M668 242L655 266 633 300 612 338 606 355 606 385 602 402 595 424 582 438 552 454"],
  [15, "M480 340L510 358 608 358"],
  [13, "M512 360L530 392 552 438 545 480"],
  [13, "M608 350L627 378 657 404 668 412"],
  [13, "M597 427L627 443 640 452"],
  [14, "M545 460L560 470 603 471 640 445 680 410 708 385 726 340"],
  [13, "M714 238L729 292 728 350"],
  [12, "M743 238L752 293 746 335 743 375 738 386 710 423 663 457 650 474 607 491 567 505 482 531"],
  [11, "M760 238L765 293 761 338 760 380"],
  [13, "M772 238L767 256"],
  [13, "M761 370L757 402 748 445"],
  [13, "M683 412L712 434 735 445"],
  [13, "M645 446L662 468 706 490 754 505"],
  [30, "M737 449L752 448 777 454"],
  [22, "M765 448L800 453 832 461"],
  [13, "M703 492L740 458"],
  [12, "M706 490L702 510 673 535 640 550 622 572 618 597 622 620 645 660 668 714"],
  [13, "M530 484L548 478 557 510 569 535 567 570 592 650 606 716"],
  [14, "M482 557L572 535"],
  [13, "M610 501L590 528 582 555 583 575 607 617 622 645 622 716"],
  [13, "M495 690L540 655 592 630"],
  [16, "M484 675L515 716"],
  [10, "M520 712L600 666"],
  [12, "M604 648L620 645"],
  [12, "M627 620L673 583 693 578 737 573 752 558"],
  [10, "M685 580L667 613 637 642"],
  [10, "M704 580L703 647 670 712"],
  [14, "M670 714L700 703 760 663 787 650 820 650"],
  [14, "M729 716L764 668 785 661 812 664 840 682 856 714"],
  [13, "M750 712L780 695 814 693"],
  [12, "M740 570L760 590 811 617"],
  [12, "M793 560L810 600 818 640 820 672"],
  [12, "M812 625L837 628 877 625 943 632 1009 641"],
  [12, "M817 661L868 678 885 714"],
  [11, "M797 232L797 370 800 412 797 452"],
  [11, "M846 236L830 272 828 340 828 415 820 453"],
  [12, "M872 252L860 300 857 335 861 362 860 422 843 468"],
  [14, "M890 262L896 280 896 420 905 445 922 474"],
  [13, "M935 262V345"],
  [13, "M936 303L961 330 961 475 966 500 968 650 972 664"],
  [11, "M1013 232V330"],
  [14, "M1060 354L1046 385 1046 680"],
  [12, "M1110 435L1109 600"],
  [22, "M910 265L940 269 1013 268 1100 269 1157 286"],
  [20, "M874 238L890 250 915 264"],
  [11, "M862 232L876 262 890 269 898 258 899 243 909 240 1022 243"],
  [11, "M1038 236L1087 250 1130 269H1157"],
  [8, "M1095 235L1110 237 1157 246"],
  [12, "M936 349L1055 352 1075 353 1157 343"],
  [14, "M930 484L1010 486 1080 489 1110 484 1157 485"],
  [13, "M822 534L880 537 1015 538 1157 543"],
  [16, "M843 462L900 470 928 482"],
  [13, "M836 485L821 540 821 552"],
  [14, "M826 542L870 562"],
  [11, "M898 540L886 624"],
  [12, "M933 576L948 625 943 665 935 716"],
  [14, "M1156 510L1120 580 1097 622 1073 650 1001 714"],
  [12, "M1136 553L1157 553"],
  [15, "M1014 664L1068 716"],
  [15, "M896 691L903 688 932 662 975 663 1020 675"],
  [11, "M1008 640V664"],
  [22, "M822 696L819 712"],
  // streets that follow the rail lines
  [12, "M590 229L603 238 643 266 691 298 718 326"],
  [12, "M482 482L492 478 535 464 546 452"],
  [12, "M599 398L653 361 675 355 721 336 738 335 762 337"],
  [12, "M779 344L842 346 922 348 934 359 933 470 932 566"],
  [12, "M806 417L853 428 867 429 1007 431 1157 434"],
  [12, "M777 436L773 452 752 535"],
  [12, "M482 638L492 621 499 609 538 563 553 555 593 556 633 557 690 561 733 561 748 554"],
  [12, "M752 540L767 550 785 557"],
  [12, "M812 562L816 567 854 616 877 652 941 717"],
  [12, "M773 463L820 475 926 503 960 510 1003 510 1157 514"],
  [12, "M872 562L880 563 897 570 913 572 1006 575 1157 578"],
  [12, "M876 673L857 686 835 688"],
  [12, "M1014 319L1011 430 1009 577 1009 637 1011 641 1072 645 1127 698 1129 717"],
  [12, "M1010 229L1021 241"],
  [12, "M842 447L830 466"],
];

function MapCanvas() {
  return (
    <svg viewBox="446 199 829 691" className="h-full w-full" role="img" aria-label="Map of rail, roads and water">
      <defs>
        <clipPath id="inner"><path d={hole} /></clipPath>
        <clipPath id="outer"><path d="M471 217h699v658H471z" /></clipPath>
        <mask id="railEdge" maskUnits="userSpaceOnUse" x="446" y="199" width="829" height="691">
          <rect x="446" y="199" width="829" height="691" fill="#fff" />
          <path d={frame} fillRule="evenodd" />
          <g fill="none" stroke="#000" strokeWidth="11" strokeLinejoin="round">{metro.map((d) => <path key={d} d={d} />)}</g>
          <path d={wedge} />
        </mask>
        <mask id="roadEdge" maskUnits="userSpaceOnUse" x="446" y="199" width="829" height="691">
          <rect x="446" y="199" width="829" height="691" fill="#fff" />
          <g fill="none" stroke="#000" strokeLinejoin="round" strokeLinecap="round">
            {roads.map(([w, d]) => <path key={d} d={d} strokeWidth={w - 1} />)}
          </g>
        </mask>
      </defs>

      <g fill="#5f8dc3" fillOpacity=".78">
        <g clipPath="url(#inner)">{water.map((d) => <path key={d} d={d} />)}</g>
        <path d={frame} fillRule="evenodd" />
      </g>

      <g opacity=".52" fill="#5c5c5c">
        <path d={frame} fillRule="evenodd" />
        <g clipPath="url(#inner)" fill="none" stroke="#5c5c5c" strokeLinejoin="round" strokeLinecap="round">
          {roads.map(([w, d]) => <path key={d} d={d} strokeWidth={w} />)}
        </g>
      </g>
      <g clipPath="url(#inner)">
        <g mask="url(#roadEdge)" fill="none" stroke="#858585" strokeOpacity=".8" strokeLinejoin="round" strokeLinecap="round">
          {roads.map(([w, d]) => <path key={d} d={d} strokeWidth={w + 1} />)}
        </g>
      </g>

      <g opacity=".59" fill="#ca582f" clipPath="url(#outer)">
        <path d={frame} fillRule="evenodd" />
        <g fill="none" stroke="#ca582f" strokeWidth="12" strokeLinejoin="round" clipPath="url(#inner)">
          {metro.map((d) => <path key={d} d={d} />)}
        </g>
        <path d={wedge} />
      </g>
      <g mask="url(#railEdge)" fill="none" stroke="#1b1210" strokeLinejoin="round">
        <path d={frame} strokeWidth="2.4" />
        <path d={wedge} strokeWidth="2.4" />
        <g clipPath="url(#inner)" strokeWidth="13.4">{metro.map((d) => <path key={d} d={d} />)}</g>
      </g>
    </svg>
  );
}

/* ---------- data ---------- */

const browserItems = [
  { icon: "folder", text: "/Volumes" },
  { icon: "favorite", text: "Favorites", leaf: true },
  { icon: "marks", text: "Spatial Bookmarks" },
  { icon: "project", text: "Project Home" },
  { icon: "homeDir", text: "Home" },
  { icon: "folder", text: "/ (Macintosh HD)" },
  { icon: "geoBox", text: "GeoPackage", leaf: true },
  { icon: "feather", text: "SpatiaLite", leaf: true },
];

const layers = [
  { name: "1 捷運 (前)", color: "bg-[#d07e61] border-[#8a4a36]", filter: true, current: true },
  { name: "2 道路 (中)", color: "bg-[#929292] border-[#7d7d7d]", filter: true },
  { name: "3 水系 (後)", color: "bg-[#7098c6] border-[#6488b4]", filter: true },
  { name: "板外框 170x160", color: "bg-white border-[#ececec]" },
];

const algorithms = [
  "3D Tiles",
  "Cartography",
  "Check geometry",
  "Database",
  "File tools",
  "Fix geometry",
  "GPS",
  "Interpolation",
  "Layer tools",
  "Mesh",
  "Metadata tools",
  "Network analysis",
  "Plots",
  "Point cloud conversion",
  "Point cloud data management",
  "Point cloud extraction",
  "Raster analysis",
  "Raster creation",
  "Raster terrain analysis",
  "Raster tools",
];

function SearchGlass() {
  return (
    <svg viewBox="0 0 14 14" className="h-[14px] w-[14px] shrink-0" aria-hidden="true">
      <circle cx="5.5" cy="5.5" r="4.5" fill="none" stroke="#777" strokeWidth="1.2" />
      <path d="M9 9l4.5 4.5" stroke="#777" strokeWidth="1.3" />
    </svg>
  );
}

function LeftDock() {
  return (
    <aside className="flex w-[438px] shrink-0 flex-col pt-px">
      <DockTitle text="Browser" />
      <DockTools bar="addLayer refresh funnel collapse info" />
      <div className="flex h-[160px] shrink-0 overflow-hidden border-y border-r border-[#d6d6d6] bg-white">
        <div className="flex-1">
          <ul className="grid h-[155px] auto-rows-fr pt-px">
            {browserItems.map((b) => <TreeRow key={b.text} {...b} indent="pl-[3px]" />)}
          </ul>
          <div className="ml-[18px] h-3 w-4 rounded-[6px] bg-[#4a7fb8]" />
        </div>
        <ScrollBar thumb="h-7" />
      </div>
      <Splitter />

      <DockTitle text="Layers" />
      <DockTools bar="brush group eye. funnel. epsFilter> expand collapse removeLayer" />
      <div className="h-[149px] shrink-0 border-r border-b border-[#d6d6d6] bg-white">
        <ul className="grid h-[78px] auto-rows-fr">
          {layers.map((l, i) => (
            <li
              key={l.name}
              className={`flex min-h-0 items-center pt-px pl-[21px] text-[14px] leading-[18px] font-bold ${l.current ? "bg-[#dadada] underline" : ""}`}
            >
              <Check id={`layer-${i}`} checked />
              <span className={`mr-[6px] ml-[7px] h-[17px] w-[17px] border ${l.color}`} />
              <label htmlFor={`layer-${i}`} className="flex-1">{l.name}</label>
              {l.filter && (
                <span className="mr-[5px] flex h-[17px] w-[17px] items-center justify-center bg-white">
                  <svg viewBox="0 0 14 14" className="h-[14px] w-[14px]" aria-hidden="true">
                    <path d="M1 1h12v2L8.5 8v5l-3-1.5V8L1 3z" fill="#f0f0f0" stroke="#666" />
                    <path d="M1 3h12" stroke="#666" />
                  </svg>
                </span>
              )}
            </li>
          ))}
        </ul>
      </div>
      <Splitter />

      <DockTitle text="Statistics" />
      <div className="relative flex h-[25px] shrink-0 items-center rounded-r-[3px] border border-l-0 border-[#bdbdbd] bg-[#fcfcfc] pl-[2px]">
        <svg viewBox="0 0 18 14" className="h-[14px] w-[18px] shrink-0" aria-hidden="true">
          <path d="M1 3c3-3 5-1 8-1s6-3 8 0-1 5 0 8-4 2-7 0-5 4-8 2 1-5-1-9z" fill="#ddd" stroke="#777" />
        </svg>
        <select aria-label="Statistics layer" className="h-full flex-1 appearance-none pl-[3px] text-[14px] font-medium outline-none">
          <option>1 捷運 (前)</option>
        </select>
        <span className="mr-2 flex"><Caret /></span>
      </div>
      <div className="mt-[3px] flex h-[25px] shrink-0 gap-[7px]">
        <div className="flex flex-1 rounded-r-[3px] border border-l-0 border-[#bdbdbd] bg-white">
          <input aria-label="Expression" className="min-w-0 flex-1 outline-none" />
          <button aria-label="Recent expressions" className="flex w-[21px] items-center justify-center border-l border-[#d9d9d9]"><Caret /></button>
        </div>
        <button aria-label="Expression builder" className="w-[25px] rounded-[3px] border border-[#bdbdbd] bg-white font-['Liberation_Serif',serif] text-[22px] leading-5 text-[#6a3b70]">
          ε
        </button>
      </div>
      <div className="mt-1 min-h-0 flex-1 border-y border-r border-[#d6d6d6] bg-white">
        <table className="w-[210px] table-fixed text-[13px]">
          <thead>
            <tr className="h-[18px] border-b border-[#c4c4c4] bg-[#fcfcfc] leading-4">
              <th className="w-[103px] border-r border-[#d0d0d0] p-0 font-medium">Statistic</th>
              <th className="p-0 font-medium">Value</th>
            </tr>
          </thead>
        </table>
      </div>
      <div className="flex h-[31px] shrink-0 items-center text-[14px]">
        <span className="-ml-1 flex"><Check id="selected-only" /></span>
        <label htmlFor="selected-only" className="ml-[5px] flex-1">Selected features only</label>
        <button aria-label="Copy" className="mr-[13px]"><Icon name="copy" size={16} /></button>
        <button aria-label="Refresh" className="mr-2"><Icon name="refresh" size={16} /></button>
        <button aria-label="More" className="flex h-5 w-6 items-end justify-end gap-px rounded-[3px] border border-[#bdbdbd] bg-white pb-[3px] text-[12px] leading-3">
          …<SmallCaret />
        </button>
      </div>
    </aside>
  );
}

function RightDock() {
  return (
    <aside className="w-[317px] shrink-0 overflow-hidden pt-px">
      <div className="-mr-[6px] flex h-full flex-col">
        <div className="pl-1"><DockTitle text="Processing Toolbox" /></div>
        <div className="pl-1"><DockTools bar="modeler. python. clock report / editPlace / wrench" /></div>
        <div className="mt-px flex h-[26px] shrink-0 items-center rounded-[3px] border border-[#bdbdbd] bg-white pl-2">
          <SearchGlass />
          <input aria-label="Search algorithms" placeholder="Search..." className="ml-2 min-w-0 flex-1 text-[14px] outline-none placeholder:text-[#7f7f7f]" />
        </div>
        <div className="flex min-h-0 flex-1 overflow-hidden border border-[#d6d6d6] bg-white">
          <ul className="grid flex-1 auto-rows-fr">
            <TreeRow icon="clock" text="Recently used" indent="pl-[9px]" />
            {algorithms.map((a) => <TreeRow key={a} icon="qgis" text={a} indent="pl-[9px]" />)}
          </ul>
          <ScrollBar thumb="h-[216px]" />
        </div>
        <Splitter />

        <div className="pl-1"><DockTitle text="Search QMS" /></div>
        <input aria-label="Search string" placeholder="Search string..." className="h-[25px] shrink-0 rounded-[3px] border border-[#bdbdbd] bg-white pl-[2px] text-[14px] outline-none placeholder:text-[#7f7f7f]" />
        <div className="mt-[6px] flex h-[25px] shrink-0 justify-end gap-[6px] text-[14px]">
          <button className="w-[104px] rounded-[3px] border border-[#bdbdbd] bg-white whitespace-nowrap">Filter by extent</button>
          <div className="relative flex w-[84px] items-center rounded-[3px] border border-[#bdbdbd] bg-[#fcfcfc]">
            <select aria-label="Service type" className="h-full flex-1 appearance-none pl-1 outline-none">
              <option>All</option>
            </select>
            <span className="mr-2 flex"><Caret /></span>
          </div>
        </div>
        <div className="mt-[7px] flex h-[75px] shrink-0 border border-[#d6d6d6] bg-white">
          <div className="flex flex-1 flex-col">
            <div className="h-4 pl-1 text-[13px] leading-4">Last used:</div>
            <div className="flex flex-1 items-center bg-[#f4f4f4] pl-1">
              <svg viewBox="0 0 26 26" className="h-[26px] w-[26px] shrink-0" aria-hidden="true">
                <path d="M1 4l12-2 8 22H3l-2-2z" fill="#e6e6e6" />
                <path d="M1 3h17L1 22z" fill="#2fa35a" />
                <path d="M2 25l10-10 9 10z" fill="#4a86e8" />
                <path d="M2 24L19 7" stroke="#fbd24c" strokeWidth="3" />
                <path d="M20 21c-1-7-6-8-6-14a6 6 0 0112 0c0 6-5 7-6 14z" fill="#d8453b" />
                <circle cx="20" cy="7" r="2" fill="#7a1f1a" />
                <text x="3" y="11" fontSize="8" fontWeight="700" fontFamily="Inter, sans-serif" fill="#fff">G</text>
              </svg>
              <div className="ml-[7px] flex-1 text-[14px] leading-[19px] whitespace-nowrap">
                <div className="font-bold">Google Satellite Hybrid</div>
                <div>
                  TMS <a href="#details" className="text-[#1a66c9] underline">details</a>,{" "}
                  <a href="#report" className="text-[#1a66c9] underline">report a problem</a>
                </div>
              </div>
              <span className="mr-3 h-[6px] w-[6px] rounded-full bg-[#0b8010]" />
              <button className="mr-[5px] h-5 w-9 rounded-[3px] border border-[#bdbdbd] bg-white text-[12px]">Add</button>
            </div>
          </div>
          <ScrollBar thumb="h-7" />
        </div>
        <div className="mt-[5px] mb-[7px] flex h-9 shrink-0 items-center justify-center border border-[#d6d6d6] bg-white text-[14px]">
          <svg viewBox="0 0 14 16" className="mr-[6px] h-4 w-[14px]" aria-hidden="true">
            <path d="M7 0c1 0 1.5.7 1.5 1.5C11 2.3 12 4 12 7c0 3 .5 4 2 5.5V13H0v-.5C1.5 11 2 10 2 7c0-3 1-4.7 3.5-5.5C5.5.7 6 0 7 0zM5 14h4c0 1.3-1 2-2 2s-2-.7-2-2z" fill="#f9a632" />
          </svg>
          <a href="#geodata" className="mr-1 text-[#1a66c9] underline">Download geodata</a> for your project
        </div>
      </div>
    </aside>
  );
}

function StatusBar() {
  return (
    <footer className="flex h-[23px] shrink-0 items-start overflow-hidden text-[12px] whitespace-nowrap">
      <div className="flex h-[26px] w-[222px] shrink-0 items-center rounded-[3px] border border-[#bdbdbd] bg-white pl-2">
        <SearchGlass />
        <input aria-label="Locator" placeholder="Type to locate (⌘K)" className="ml-2 min-w-0 flex-1 text-[14px] outline-none placeholder:text-[#7f7f7f]" />
      </div>
      <div className="flex h-7 flex-1 items-center justify-end pr-px">
        <label htmlFor="coordinate" className="mr-1">Coordinate</label>
        <input id="coordinate" defaultValue="300208, 2774922" className="mr-[5px] h-[25px] w-[119px] rounded-[3px] border border-[#bdbdbd] bg-white px-2 outline-none" />
        <svg viewBox="0 0 16 16" className="mr-[14px] h-4 w-4" aria-hidden="true">
          <path d="M2 4l4-2 1 4 3-5 2 1-2 5 4 1-3 2 2 4-4-1-3 2-3-2 2-3-4-2z" fill="#ddd" stroke="#222" strokeWidth="1.3" />
          <path d="M2 13L14 3" stroke="#222" />
        </svg>
        <label htmlFor="scale" className="mr-[3px]">Scale</label>
        <div className="mr-[14px] flex h-[25px] w-[98px] rounded-[3px] border border-[#bdbdbd] bg-white">
          <input id="scale" defaultValue="1:42973" className="min-w-0 flex-1 px-[3px] outline-none" />
          <button aria-label="Scales" className="flex w-[22px] items-center justify-center border-l border-[#d0d0d0]"><Caret /></button>
        </div>
        <svg viewBox="0 0 14 16" className="mr-2 h-4 w-[14px]" aria-hidden="true">
          <path d="M3.5 8V5a3.5 3.5 0 017 0v3" fill="none" stroke="#777" strokeWidth="1.8" />
          <rect x="1" y="7" width="12" height="9" rx="1" fill="#6d6d6d" />
        </svg>
        <label htmlFor="magnifier" className="mr-1">Magnifier</label>
        <Spin id="magnifier" value="100%" className="mr-[11px] w-[97px]" />
        <label htmlFor="rotation" className="mr-[9px]">Rotation</label>
        <Spin id="rotation" value="0.0 °" className="mr-[9px] w-[98px]" />
        <Check id="render" checked />
        <label htmlFor="render" className="mr-4 ml-[5px]">Render</label>
        <button className="mr-[25px] flex items-center gap-[2px]">
          <svg viewBox="0 0 16 16" className="h-4 w-4" aria-hidden="true">
            <circle cx="8" cy="8" r="6" fill="#bbb" stroke="#777" />
            <path d="M0 8h16M8 1v14M3 4.5h10M3 11.5h10M8 2c-4 3-4 9 0 12M8 2c4 3 4 9 0 12" fill="none" stroke="#666" />
          </svg>
          EPSG:3826
        </button>
        <button aria-label="Messages">
          <svg viewBox="0 0 18 16" className="h-4 w-[18px]" aria-hidden="true">
            <path d="M9 1c5 0 8 2.5 8 6 0 2-1 3.5-2 4.5l1 3.5-4-2.5c-6 1-11-1-11-5.5C1 3.5 4 1 9 1z" fill="#5a5a5a" />
            <path d="M4.5 7h2M8 7h2M11.5 7h2" stroke="#fff" strokeWidth="1.8" />
          </svg>
        </button>
      </div>
    </footer>
  );
}

function App() {
  return (
    <div className="h-screen bg-[#6b6460]">
      <div className="flex h-full flex-col overflow-hidden rounded-t-[5px] bg-[#fefefe] font-[Inter,'Noto_Sans_CJK_TC',sans-serif] text-[#222]">
        <header className="flex h-[33px] shrink-0 items-center border-b border-[#e8e8e8] pb-px pl-[5px]">
          <button aria-label="Close window" className="mr-[9px] h-4 w-4 rounded-full border border-[#d0554b] bg-[#ec6f65]" />
          <button aria-label="Minimize window" className="mr-[9px] h-4 w-4 rounded-full border border-[#d9a032] bg-[#f4bc45]" />
          <button aria-label="Zoom window" className="mr-[15px] h-4 w-4 rounded-full border border-[#55a938] bg-[#64c546]" />
          <h1 className="text-[14px] font-semibold text-[#444]">taipei_laser — QGIS</h1>
        </header>

        <ToolRow bar={mainBar} />
        <ToolRow bar={layerBar} />
        <ToolRow bar="magnet snapAll-. snapMode-!.">
          <Spin id="tolerance" value="12" off className="w-[104px] text-[14px]" />
          <div className="mr-[2px] ml-[2px] flex h-[25px] w-[105px] items-center rounded-[3px] border border-[#cdcdcd]">
            <select aria-label="Units" className="h-full flex-1 appearance-none pl-1 text-[14px] text-[#8f8f8f] outline-none">
              <option>px</option>
            </select>
            <span className="mr-2 flex"><Caret light /></span>
          </div>
          {["topo", "overlap.", "cross-", "selfSnap->", "trace-"].map((s) => <Tool key={s} spec={s} />)}
        </ToolRow>
        <ToolRow bar="kml kmz html quad sheetMap" />

        <main className="flex min-h-0 flex-1">
          <LeftDock />
          <div className="flex w-[7px] shrink-0 items-center justify-center">
            <div className="h-[18px] border-l-2 border-dotted border-[#cdcdcd]" />
          </div>
          <section className="mt-px mb-1 min-w-0 flex-1 border border-[#dcdcdc] bg-white">
            <MapCanvas />
          </section>
          <div className="w-[7px] shrink-0" />
          <RightDock />
        </main>
        <StatusBar />
      </div>
    </div>
  );
}

export default App;
